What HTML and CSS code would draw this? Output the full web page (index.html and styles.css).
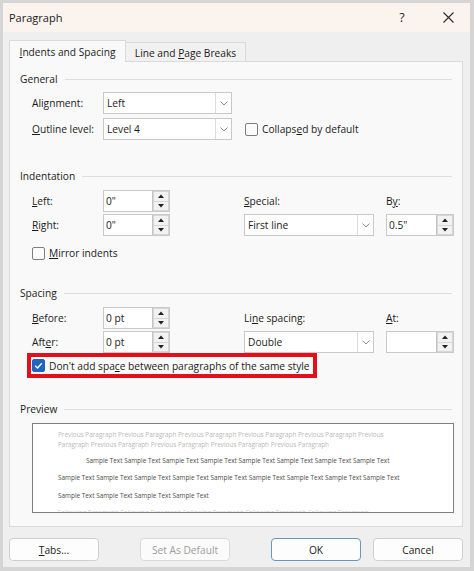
FILE: index.html
```html
<!DOCTYPE html>
<html>
<head>
<meta charset="utf-8">
<link rel="stylesheet" href="styles.css">
</head>
<body>
<div class="frame">
  <div class="dialog">
    <div class="titlebar">
      <div class="title">Paragraph</div>
      <div class="help">?</div>
      <div class="close"><svg width="11" height="11" viewBox="0 0 11 11"><path d="M0.5 0.5 L10.5 10.5 M10.5 0.5 L0.5 10.5" stroke="#2b2b2b" stroke-width="1.1" fill="none"/></svg></div>
    </div>
    <div class="tabs">
      <div class="tab active"><span><u>I</u>ndents and Spacing</span></div>
      <div class="tab"><span>Line and <u>P</u>age Breaks</span></div>
    </div>
    <div class="panel">
      <div class="heading h-general">General</div>
      <div class="grid-general">
        <div class="label"><span>Ali<u>g</u>nment:</span></div>
        <div class="select"><span class="sel-val">Left</span><span class="chev"><svg width="8" height="5" viewBox="0 0 8 5"><path d="M0.5 0.5 L4 4 L7.5 0.5" stroke="#8a8a8a" fill="none"/></svg></span></div>
        <div></div>
        <div></div>
        <div class="label"><span><u>O</u>utline level:</span></div>
        <div class="select"><span class="sel-val">Level 4</span><span class="chev"><svg width="8" height="5" viewBox="0 0 8 5"><path d="M0.5 0.5 L4 4 L7.5 0.5" stroke="#8a8a8a" fill="none"/></svg></span></div>
        <div></div>
        <div class="check-row"><span class="box"></span><span>Collaps<u>e</u>d by default</span></div>
      </div>

      <div class="heading h-indent">Indentation</div>
      <div class="grid-six">
        <div class="label"><span><u>L</u>eft:</span></div>
        <div class="spin"><span class="spin-val">0"</span><span class="spin-btns"><span class="sb"><svg width="6" height="4" viewBox="0 0 6 4"><path d="M0 4 L3 0.5 L6 4 Z" fill="#222"/></svg></span><span class="sb"><svg width="6" height="4" viewBox="0 0 6 4"><path d="M0 0 L3 3.5 L6 0 Z" fill="#222"/></svg></span></span></div>
        <div></div>
        <div class="label"><span><u>S</u>pecial:</span></div>
        <div></div>
        <div class="label"><span>B<u>y</u>:</span></div>

        <div class="label"><span><u>R</u>ight:</span></div>
        <div class="spin"><span class="spin-val">0"</span><span class="spin-btns"><span class="sb"><svg width="6" height="4" viewBox="0 0 6 4"><path d="M0 4 L3 0.5 L6 4 Z" fill="#222"/></svg></span><span class="sb"><svg width="6" height="4" viewBox="0 0 6 4"><path d="M0 0 L3 3.5 L6 0 Z" fill="#222"/></svg></span></span></div>
        <div></div>
        <div class="select"><span class="sel-val">First line</span><span class="chev"><svg width="8" height="5" viewBox="0 0 8 5"><path d="M0.5 0.5 L4 4 L7.5 0.5" stroke="#8a8a8a" fill="none"/></svg></span></div>
        <div></div>
        <div class="spin"><span class="spin-val">0.5"</span><span class="spin-btns"><span class="sb"><svg width="6" height="4" viewBox="0 0 6 4"><path d="M0 4 L3 0.5 L6 4 Z" fill="#222"/></svg></span><span class="sb"><svg width="6" height="4" viewBox="0 0 6 4"><path d="M0 0 L3 3.5 L6 0 Z" fill="#222"/></svg></span></span></div>
      </div>
      <div class="check-row mirror"><span class="box"></span><span><u>M</u>irror indents</span></div>

      <div class="heading h-spacing">Spacing</div>
      <div class="grid-six">
        <div class="label"><span><u>B</u>efore:</span></div>
        <div class="spin"><span class="spin-val">0 pt</span><span class="spin-btns"><span class="sb"><svg width="6" height="4" viewBox="0 0 6 4"><path d="M0 4 L3 0.5 L6 4 Z" fill="#222"/></svg></span><span class="sb"><svg width="6" height="4" viewBox="0 0 6 4"><path d="M0 0 L3 3.5 L6 0 Z" fill="#222"/></svg></span></span></div>
        <div></div>
        <div class="label"><span>Li<u>n</u>e spacing:</span></div>
        <div></div>
        <div class="label"><span><u>A</u>t:</span></div>

        <div class="label"><span>Aft<u>e</u>r:</span></div>
        <div class="spin"><span class="spin-val">0 pt</span><span class="spin-btns"><span class="sb"><svg width="6" height="4" viewBox="0 0 6 4"><path d="M0 4 L3 0.5 L6 4 Z" fill="#222"/></svg></span><span class="sb"><svg width="6" height="4" viewBox="0 0 6 4"><path d="M0 0 L3 3.5 L6 0 Z" fill="#222"/></svg></span></span></div>
        <div></div>
        <div class="select"><span class="sel-val">Double</span><span class="chev"><svg width="8" height="5" viewBox="0 0 8 5"><path d="M0.5 0.5 L4 4 L7.5 0.5" stroke="#8a8a8a" fill="none"/></svg></span></div>
        <div></div>
        <div class="spin"><span class="spin-val"></span><span class="spin-btns"><span class="sb"><svg width="6" height="4" viewBox="0 0 6 4"><path d="M0 4 L3 0.5 L6 4 Z" fill="#222"/></svg></span><span class="sb"><svg width="6" height="4" viewBox="0 0 6 4"><path d="M0 0 L3 3.5 L6 0 Z" fill="#222"/></svg></span></span></div>
      </div>
      <div class="highlight">
        <span class="box checked"><svg width="13" height="13" viewBox="0 0 13 13"><path d="M3.2 6.8 L5.5 9 L9.8 4.3" stroke="#fff" stroke-width="1.4" fill="none"/></svg></span><span>Don't add spa<u>c</u>e between paragraphs of the same style</span>
      </div>

      <div class="heading h-preview">Preview</div>
      <div class="preview">
        <div class="pv-prev">Previous Paragraph Previous Paragraph Previous Paragraph Previous Paragraph Previous Paragraph Previous</div>
        <div class="pv-prev">Paragraph Previous Paragraph Previous Paragraph Previous Paragraph Previous Paragraph</div>
        <div class="pv-sample first">Sample Text Sample Text Sample Text Sample Text Sample Text Sample Text Sample Text Sample Text</div>
        <div class="pv-sample">Sample Text Sample Text Sample Text Sample Text Sample Text Sample Text Sample Text Sample Text Sample Text</div>
        <div class="pv-sample">Sample Text Sample Text Sample Text Sample Text</div>
        <div class="pv-prev following">Following Paragraph Following Paragraph Following Paragraph Following Paragraph Following Paragraph</div>
      </div>
    </div>
    <div class="buttons">
      <div class="btn"><span><u>T</u>abs...</span></div>
      <div class="btn disabled gap">Set As Default</div>
      <div class="btn default gap">OK</div>
      <div class="btn cancel">Cancel</div>
    </div>
  </div>
</div>
</body>
</html>
```

FILE: styles.css
```css
* { box-sizing: border-box; }
html, body { margin: 0; padding: 0; }
body {
  width: 474px;
  height: 571px;
  overflow: hidden;
  font-family: "Open Sans", "Noto Sans", sans-serif;
  font-size: 10.2px;
  color: #1b1b1b;
  background: #d4d4d4;
}
u { text-decoration: underline; text-underline-offset: 1px; text-decoration-thickness: 1px; }

.frame {
  width: 474px;
  height: 571px;
  padding: 3px 4px 4px 3px;
  background: #d5d5d5;
}
.dialog {
  height: 100%;
  background: #efefef;
  display: flex;
  flex-direction: column;
}

.titlebar {
  height: 29px;
  flex: none;
  background: #fbf4ee;
  display: flex;
  align-items: center;
  padding-left: 6px;
}
.title { flex: 1; font-size: 11px; color: #1a1a1a; }
.help { width: 20px; text-align: center; font-size: 12.5px; color: #2b2b2b; margin-right: 26px; }
.close { width: 20px; height: 20px; display: flex; align-items: center; justify-content: center; margin-right: 12px; }

.tabs {
  flex: none;
  display: flex;
  align-items: flex-start;
  height: 22px;
  margin-top: 8px;
  margin-bottom: -1px;
  padding-left: 6px;
}
.tab {
  height: 19px;
  margin-top: 2px;
  width: 120px;
  border: 1px solid #dadada;
  border-bottom: none;
  border-left: none;
  background: #f1f1f1;
  display: flex;
  align-items: center;
  justify-content: center;
  padding-top: 1px;
}
.tab.active {
  position: relative;
  z-index: 1;
  height: 22px;
  margin-top: 0;
  width: 117px;
  border-left: 1px solid #dadada;
  background: #f9f9f9;
  padding-top: 0;
}

.panel {
  flex: 1;
  margin: 0 7px 0 6px;
  border: 1px solid #dadada;
  background: #f9f9f9;
  padding: 10px 10px 0 10px;
}

.heading {
  display: flex;
  align-items: center;
  height: 14px;
  color: #1b1b1b;
}
.heading::after {
  content: "";
  flex: 1;
  height: 1px;
  background: #dedede;
  margin-left: 7px;
}
.h-indent { margin-top: 29px; }
.h-spacing { margin-top: 26px; }
.h-preview { margin-top: 24px; }

.label { display: flex; align-items: center; }

.grid-general {
  margin: 6px 0 0 12px;
  display: grid;
  grid-template-columns: 71px 129px 13px auto;
  grid-auto-rows: 22px;
  row-gap: 4px;
}
.grid-six {
  margin: 7px 0 0 12px;
  display: grid;
  grid-template-columns: 71px 67px 74px 130px 12px 68px;
  grid-auto-rows: 22px;
  row-gap: 2px;
}

.select {
  display: flex;
  border: 1px solid #c9c9c9;
  background: #fff;
}
.sel-val { flex: 1; display: flex; align-items: center; padding-left: 3px; }
.chev {
  width: 16px;
  border-left: 1px solid #dcdcdc;
  display: flex;
  align-items: center;
  justify-content: center;
}

.spin {
  display: flex;
  border: 1px solid #c9c9c9;
  background: #fff;
}
.spin-val { flex: 1; display: flex; align-items: center; padding-left: 2px; }
.spin-btns {
  width: 17px;
  border-left: 1px solid #c4c4c4;
  background: #d6d6d6;
  display: flex;
  flex-direction: column;
  padding: 1px;
  gap: 1px;
}
.sb {
  flex: 1;
  background: #f2f2f2;
  display: flex;
  align-items: center;
  justify-content: center;
}

.check-row { display: flex; align-items: center; }
.box {
  width: 13px;
  height: 13px;
  flex: none;
  border: 1px solid #7d7d7d;
  border-radius: 2px;
  background: #fbfbfb;
  margin-right: 4px;
}
.box.checked {
  background: #1d64c4;
  border-color: #1d64c4;
  display: flex;
  align-items: center;
  justify-content: center;
}
.box.checked svg { flex: none; }
.mirror { margin: 10px 0 0 12px; height: 14px; }

.highlight {
  margin-left: 7px;
  width: 290px;
  height: 25px;
  border: 4px solid #e2101a;
  background: #fafafa;
  display: flex;
  align-items: center;
  padding-left: 1px;
}

.preview {
  margin: 7px 0 0 12px;
  width: 422px;
  height: 90px;
  border: 1px solid #808080;
  background: #fff;
  overflow: hidden;
  padding: 6px 0 0 25px;
  font-size: 6.4px;
  white-space: nowrap;
}
.pv-prev { line-height: 9.5px; height: 9.5px; color: #b9b9b9; }
.pv-sample { line-height: 17.5px; height: 17.5px; color: #4a4a4a; }
.pv-sample.first { margin-top: 2.5px; padding-left: 28px; }
.pv-prev.following { margin-top: 3.5px; color: #cfcfcf; }

.buttons {
  flex: none;
  display: flex;
  margin-top: 11px;
  margin-bottom: 6px;
  padding: 0 7px 0 6px;
}
.btn {
  width: 90px;
  height: 23px;
  border: 1px solid #cfcfcf;
  border-radius: 4px;
  background: #fdfdfd;
  display: flex;
  align-items: center;
  justify-content: center;
  color: #1b1b1b;
}
.btn.gap { margin-left: 41px; }
.btn.cancel { margin-left: 12px; }
.btn.disabled { color: #9d9d9d; background: #fbfbfb; border-color: #d9d9d9; }
.btn.default { border-color: #6a98bb; }
```
